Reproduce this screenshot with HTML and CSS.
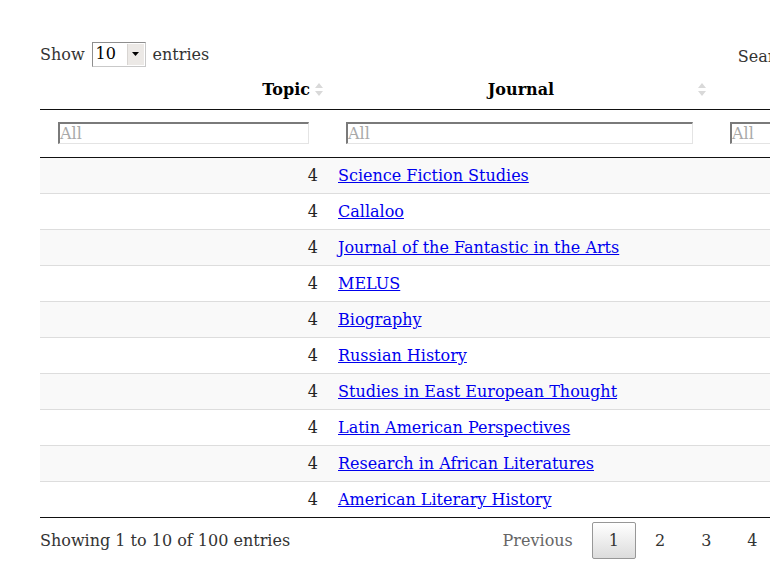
FILE: index.html
```html
<!DOCTYPE html>
<html>
<head>
<meta charset="utf-8">
<link rel="stylesheet" href="styles.css">
</head>
<body>
<div class="wrapper">
  <div class="topbar">
    <div class="length">
      <span>Show</span>
      <span class="select"><span class="select-val">10</span><span class="select-btn"><svg width="7" height="4" viewBox="0 0 7 4"><path d="M0 0H7L3.5 4Z" fill="#000"/></svg></span></span>
      <span>entries</span>
    </div>
    <div class="filter">Search:<span class="search-input"></span></div>
  </div>

  <table class="dt">
    <colgroup><col class="c1"><col class="c2"><col class="c3"></colgroup>
    <thead>
      <tr class="head">
        <th class="right">Topic<span class="sort"><svg width="8" height="13" viewBox="0 0 8 13"><path d="M4 0L8 5H0Z M0 8H8L4 13Z" fill="#d9d9d9"/></svg></span></th>
        <th class="center">Journal<span class="sort"><svg width="8" height="13" viewBox="0 0 8 13"><path d="M4 0L8 5H0Z M0 8H8L4 13Z" fill="#d9d9d9"/></svg></span></th>
        <th class="center">Documents<span class="sort"><svg width="8" height="13" viewBox="0 0 8 13"><path d="M4 0L8 5H0Z M0 8H8L4 13Z" fill="#d9d9d9"/></svg></span></th>
      </tr>
      <tr class="filters">
        <td><input class="fi" placeholder="All"></td>
        <td><input class="fi" placeholder="All"></td>
        <td><input class="fi" placeholder="All"></td>
      </tr>
    </thead>
    <tbody>
      <tr class="odd"><td class="num">4</td><td><a href="#">Science Fiction Studies</a></td><td class="num">56</td></tr>
      <tr class="even"><td class="num">4</td><td><a href="#">Callaloo</a></td><td class="num">48</td></tr>
      <tr class="odd"><td class="num">4</td><td><a href="#">Journal of the Fantastic in the Arts</a></td><td class="num">41</td></tr>
      <tr class="even"><td class="num">4</td><td><a href="#">MELUS</a></td><td class="num">37</td></tr>
      <tr class="odd"><td class="num">4</td><td><a href="#">Biography</a></td><td class="num">33</td></tr>
      <tr class="even"><td class="num">4</td><td><a href="#">Russian History</a></td><td class="num">30</td></tr>
      <tr class="odd"><td class="num">4</td><td><a href="#">Studies in East European Thought</a></td><td class="num">28</td></tr>
      <tr class="even"><td class="num">4</td><td><a href="#">Latin American Perspectives</a></td><td class="num">25</td></tr>
      <tr class="odd"><td class="num">4</td><td><a href="#">Research in African Literatures</a></td><td class="num">23</td></tr>
      <tr class="even"><td class="num">4</td><td><a href="#">American Literary History</a></td><td class="num">21</td></tr>
    </tbody>
  </table>

  <div class="footer">
    <div class="info">Showing 1 to 10 of 100 entries</div>
    <div class="paginate">
      <span class="pbtn disabled">Previous</span>
      <span class="pbtn current">1</span>
      <span class="pbtn">2</span>
      <span class="pbtn">3</span>
      <span class="pbtn">4</span>
      <span class="pbtn">5</span>
      <span class="ellipsis">…</span>
      <span class="pbtn">10</span>
      <span class="pbtn">Next</span>
    </div>
  </div>
</div>
</body>
</html>
```

FILE: styles.css
```css
html, body {
  margin: 0;
  padding: 0;
  overflow: hidden;
  background: #fff;
}
body {
  font-family: "DejaVu Serif", serif;
  font-size: 16px;
  color: #333;
}
.wrapper {
  width: 958px;
  padding: 42px 0 0 40px;
}
.topbar {
  display: flex;
  justify-content: space-between;
  align-items: center;
  height: 28px;
}
.length {
  display: flex;
  align-items: center;
  gap: 7px;
  margin-top: -4px;
}
.select {
  display: inline-flex;
  align-items: stretch;
  width: 54px;
  height: 25px;
  box-sizing: border-box;
  border: 1px solid #8e8e8e;
  border-right-color: #c9c9c9;
  border-bottom-color: #c9c9c9;
  background: #fff;
  color: #000;
}
.select-val {
  flex: 1;
  padding-left: 3px;
  line-height: 22px;
}
.select-btn {
  width: 16px;
  margin: 1px 1px 1px 0;
  background: #ece9e6;
  border-left: 1px solid #d8d5d2;
  display: flex;
  align-items: center;
  justify-content: center;
}
.filter {
  display: flex;
  align-items: center;
  gap: 8px;
}
.search-input {
  display: inline-block;
  width: 190px;
  height: 22px;
  border: 2px inset #999;
  box-sizing: border-box;
}
table.dt {
  width: 100%;
  table-layout: fixed;
  border-collapse: separate;
  border-spacing: 0;
}
col.c1 { width: 288px; }
col.c2 { width: 384px; }
.head th {
  position: relative;
  padding: 10px 18px 10px 10px;
  font-weight: bold;
  color: #000;
  text-align: center;
  border-bottom: 1px solid #111;
  line-height: 19px;
}
.head th.right { text-align: right; }
.head th.center { padding-left: 12px; padding-right: 10px; }
.sort {
  position: absolute;
  right: 5px;
  top: 13px;
  line-height: 0;
}
.head th.center .sort { right: 6px; }
.filters td {
  padding: 12px 19px 13px 18px;
  border-bottom: 1px solid #111;
}
.fi {
  display: block;
  box-sizing: border-box;
  width: 100%;
  height: 22px;
  margin: 0;
  padding: 0;
  font-family: "DejaVu Serif", serif;
  font-size: 16px;
  border-style: solid;
  border-width: 2px 1px 1px 2px;
  border-color: #7a7a7a #e4e4e4 #e4e4e4 #7a7a7a;
  background: #fff;
  outline: none;
}
.fi::placeholder { color: #a9a9a9; }
tbody td {
  padding: 8px 10px;
  line-height: 19px;
  border-top: 1px solid #ddd;
  color: #222;
  white-space: nowrap;
}
tbody tr:first-child td { border-top: none; }
tbody tr:last-child td { border-bottom: 1px solid #111; }
tbody tr.odd { background: #f9f9f9; }
tbody tr.even { background: #fff; }
td.num { text-align: right; }
tbody a { color: #0000ee; text-decoration: underline; }
.footer {
  display: flex;
  justify-content: space-between;
  align-items: flex-start;
}
.info {
  padding-top: 13px;
  line-height: 19px;
}
.paginate {
  display: flex;
  padding-top: 4px;
}
.pbtn {
  display: inline-block;
  padding: 8px 16px;
  margin-left: 2px;
  border: 1px solid transparent;
  border-radius: 2px;
  line-height: 19px;
  color: #333;
}
.pbtn.disabled { color: #666; }
.pbtn.current {
  border-color: #979797;
  background: linear-gradient(to bottom, #fff 0%, #dcdcdc 100%);
}
.ellipsis {
  padding: 9px 15px;
  line-height: 19px;
}
```
